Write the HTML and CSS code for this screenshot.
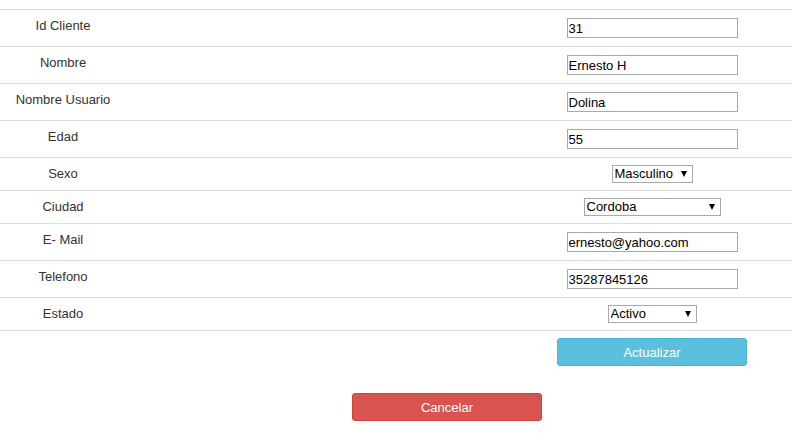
FILE: index.html
```html
<!DOCTYPE html>
<html lang="es">
<head>
<meta charset="utf-8">
<title>Editar Cliente</title>
<link rel="stylesheet" href="styles.css">
</head>
<body>
<form class="form">
<table class="grid">
  <colgroup><col class="c-label"><col class="c-gap"><col class="c-field"></colgroup>
  <tr class="row-in"><td class="lbl">Id Cliente</td><td></td><td class="fld"><input class="txt" type="text" value="31"></td></tr>
  <tr class="row-in"><td class="lbl">Nombre</td><td></td><td class="fld"><input class="txt" type="text" value="Ernesto H"></td></tr>
  <tr class="row-in"><td class="lbl">Nombre Usuario</td><td></td><td class="fld"><input class="txt" type="text" value="Dolina"></td></tr>
  <tr class="row-in"><td class="lbl">Edad</td><td></td><td class="fld"><input class="txt" type="text" value="55"></td></tr>
  <tr class="row-sel"><td class="lbl">Sexo</td><td></td><td class="fld"><span class="sel-wrap"><select class="sel sel-sexo"><option>Masculino</option><option>Femenino</option></select></span></td></tr>
  <tr class="row-sel"><td class="lbl">Ciudad</td><td></td><td class="fld"><span class="sel-wrap"><select class="sel sel-ciudad"><option>Cordoba</option></select></span></td></tr>
  <tr class="row-in"><td class="lbl">E- Mail</td><td></td><td class="fld"><input class="txt" type="text" value="ernesto@yahoo.com"></td></tr>
  <tr class="row-in"><td class="lbl">Telefono</td><td></td><td class="fld"><input class="txt" type="text" value="35287845126"></td></tr>
  <tr class="row-sel"><td class="lbl">Estado</td><td></td><td class="fld"><span class="sel-wrap"><select class="sel sel-estado"><option>Activo</option><option>Inactivo</option></select></span></td></tr>
  <tr class="row-btn"><td></td><td></td><td class="fld"><button type="button" class="btn btn-info">Actualizar</button></td></tr>
</table>
<div class="cancel-bar"><button type="button" class="btn btn-danger">Cancelar</button></div>
</form>
</body>
</html>
```
FILE: styles.css
```css
html, body {
  margin: 0;
  padding: 0;
  background: #fff;
}
body {
  font-family: "Liberation Sans", Arial, sans-serif;
  font-size: 13px;
  color: #333;
}
.form {
  padding-top: 9px;
}
.grid {
  width: 100%;
  border-collapse: collapse;
  border-spacing: 0;
  table-layout: fixed;
}
.c-label { width: 126px; }
.c-field { width: 280px; }
.grid td {
  border-top: 1px solid #ddd;
  padding: 8px 0;
  vertical-align: top;
  line-height: 15px;
}
.lbl {
  text-align: center;
  color: #333;
}
.fld {
  text-align: center;
}
.row-sel td.fld {
  padding: 7px 0;
}
.row-btn td {
  padding: 7px 0 8px;
}
.txt {
  box-sizing: border-box;
  width: 171px;
  height: 20px;
  margin: 0;
  padding: 0 1px;
  border: 1px solid #a9a9a9;
  border-radius: 0;
  font-family: "Liberation Sans", Arial, sans-serif;
  font-size: 13px;
  color: #000;
  background: #fff;
  vertical-align: top;
  outline: none;
}
.sel-wrap {
  position: relative;
  display: inline-block;
  vertical-align: top;
}
.sel-wrap::after {
  content: "";
  position: absolute;
  right: 6px;
  top: 6px;
  width: 0;
  height: 0;
  border-left: 3.5px solid transparent;
  border-right: 3.5px solid transparent;
  border-top: 6px solid #000;
  pointer-events: none;
}
.sel {
  -webkit-appearance: none;
  appearance: none;
  box-sizing: border-box;
  height: 18px;
  margin: 0;
  padding: 0 0 0 2px;
  border: 1px solid #a9a9a9;
  border-radius: 0;
  background: #fff;
  font-family: "Liberation Sans", Arial, sans-serif;
  font-size: 13px;
  line-height: 16px;
  color: #000;
  text-align: left;
  vertical-align: top;
  outline: none;
}
.sel-sexo { width: 81px; }
.sel-ciudad { width: 137px; }
.sel-estado { width: 89px; }
.btn {
  box-sizing: border-box;
  width: 190px;
  height: 28px;
  margin: 0;
  padding: 0;
  border: 1px solid transparent;
  border-radius: 3px;
  font-family: "Liberation Sans", Arial, sans-serif;
  font-size: 13px;
  color: #fff;
  cursor: pointer;
  vertical-align: top;
}
.btn-info {
  background: #5bc0de;
  border-color: #46b8da;
}
.btn-danger {
  background: #d9534f;
  border-color: #d43f3a;
}
.cancel-bar {
  padding: 19px 0 0 352px;
}
```
